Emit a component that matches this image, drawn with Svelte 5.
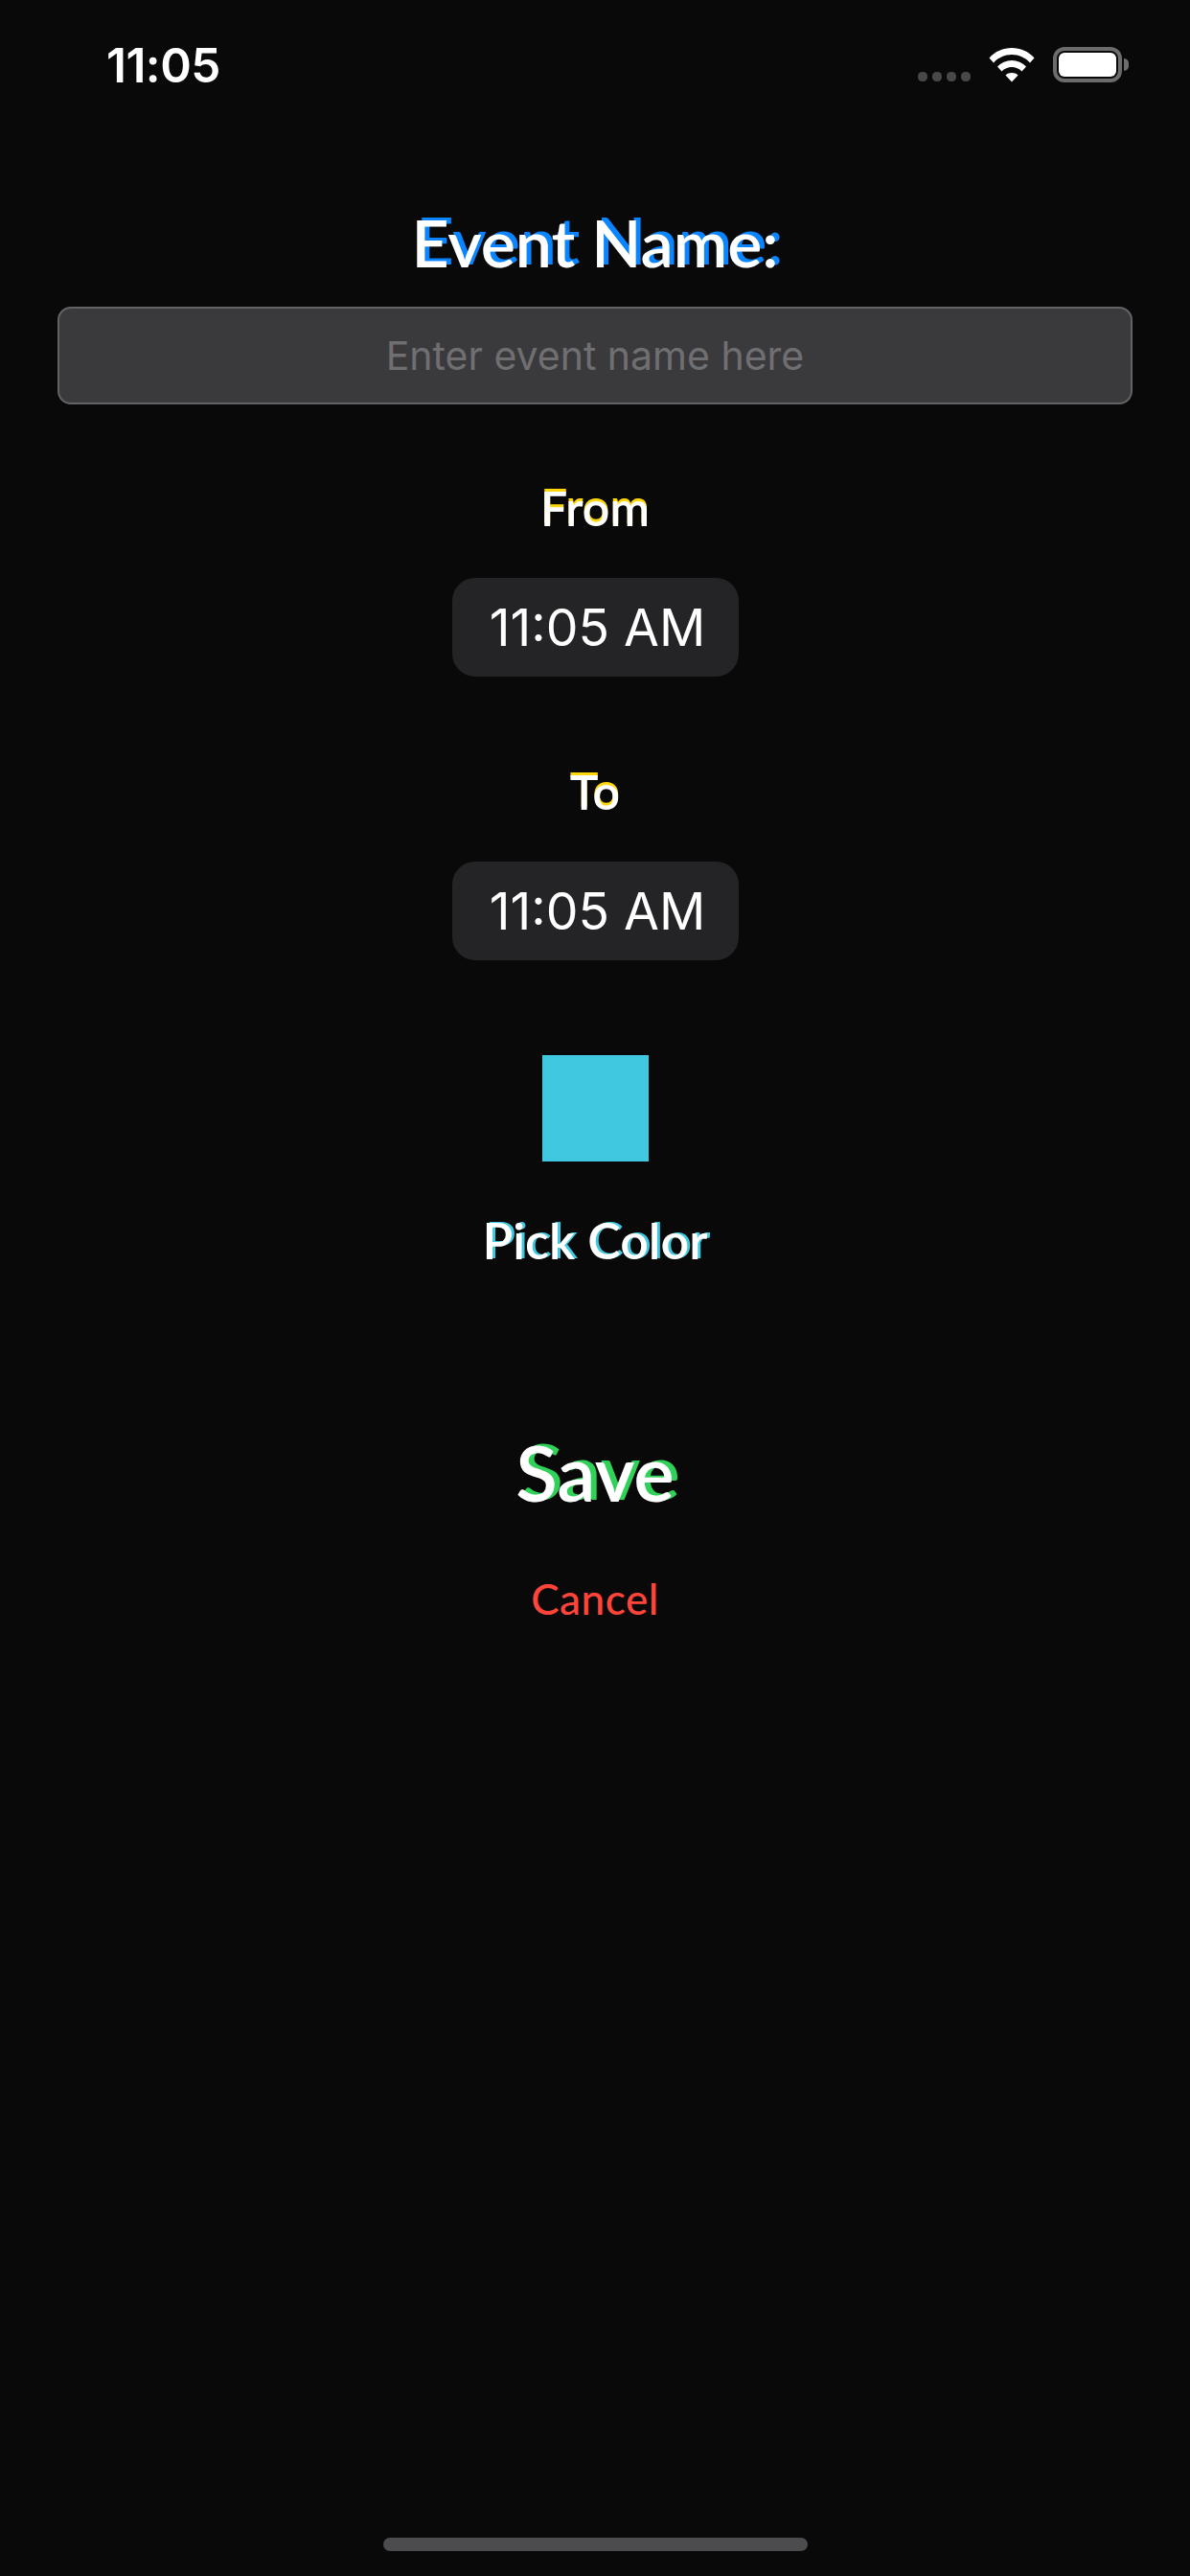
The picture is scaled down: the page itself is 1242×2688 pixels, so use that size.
<script>
	let eventName = $state('');
	const fromTime = '11:05 AM';
	const toTime = '11:05 AM';
</script>

<main class="screen">
	<header class="status">
		<span class="clock">11:05</span>
		<div class="indicators">
			<div class="signal"><i></i><i></i><i></i><i></i></div>
			<svg class="wifi" viewBox="0 0 48 37" width="48" height="37">
				<path d="M0.5 11.5C6.5 4.5 15 1 24 1s17.5 3.500 23.500 10.500L43 16.500C38 11 31.500 8 24 8S10 11 5 16.500Z" fill="#fff" />
				<path d="M9 20.500C13 16.200 18.200 14 24 14s11 2.200 15 6.500L34.500 25.500C31.700 22.500 28 21 24 21s-7.700 1.500-10.500 4.500Z" fill="#fff" />
				<path d="M17.500 29.500C19.300 27.700 21.500 27 24 27s4.700 .7 6.500 2.500L24 36.500Z" fill="#fff" />
			</svg>
			<div class="battery">
				<div class="cell"><div class="charge"></div></div>
				<div class="nub"></div>
			</div>
		</div>
	</header>

	<h1 class="title">Event Name:</h1>
	<input class="name-input" type="text" placeholder="Enter event name here" bind:value={eventName} />

	<div class="label from">From</div>
	<div class="picker">{fromTime}</div>

	<div class="label to">To</div>
	<div class="picker">{toTime}</div>

	<button class="swatch" aria-label="Color swatch"></button>
	<div class="pick-color">Pick Color</div>

	<button class="save">Save</button>
	<button class="cancel">Cancel</button>

	<div class="home-bar"></div>
</main>

<style>
	:global(body) {
		background: #09090a;
	}
	.screen {
		display: flex;
		flex-direction: column;
		align-items: center;
		width: 1242px;
		height: 2688px;
		background: #09090a;
		color: #fff;
		font-family: Lato, 'Liberation Sans', sans-serif;
		overflow: hidden;
	}
	.status {
		display: flex;
		justify-content: space-between;
		align-items: flex-start;
		box-sizing: border-box;
		width: 100%;
		height: 100px;
		padding: 39px 64px 0 111px;
	}
	.clock {
		font-family: Inter, sans-serif;
		font-size: 49.500px;
		font-weight: 600;
		line-height: 58px;
		letter-spacing: -0.5px;
	}
	.indicators {
		display: flex;
		align-items: flex-start;
		padding-top: 10px;
	}
	.signal {
		display: flex;
		gap: 5px;
		margin: 26px 19px 0 0;
	}
	.signal i {
		width: 10px;
		height: 10px;
		border-radius: 45%;
		background: #48484a;
	}
	.wifi {
		margin-right: 19px;
	}
	.battery {
		display: flex;
		align-items: center;
	}
	.cell {
		box-sizing: border-box;
		width: 72px;
		height: 37px;
		padding: 2px;
		border: 4px solid #6c6c6e;
		border-radius: 12px;
	}
	.charge {
		width: 100%;
		height: 100%;
		background: #fff;
		border-radius: 6px;
	}
	.nub {
		width: 5px;
		height: 13px;
		margin-left: 2px;
		background: #6c6c6e;
		border-radius: 0 6px 6px 0;
	}
	.title {
		margin: 123px 0 0;
		font-size: 68px;
		font-weight: 600;
		line-height: 60px;
		text-shadow: 5px -3px 0 #0a84ff;
	}
	.name-input {
		box-sizing: border-box;
		width: 1122px;
		height: 102px;
		margin-top: 37px;
		background: #3a3a3c;
		border: 2px solid #636366;
		border-radius: 14px;
		color: #fff;
		font-family: Inter, sans-serif;
		font-size: 41px;
		text-align: center;
		outline: none;
	}
	.name-input::placeholder {
		color: #6f6f72;
		opacity: 1;
	}
	.label {
		font-size: 50px;
		font-weight: 600;
		line-height: 60px;
		text-shadow: 0 -3px 0 #ffd60a;
	}
	.from {
		margin-top: 78px;
	}
	.to {
		margin-top: 90px;
	}
	.picker {
		box-sizing: border-box;
		width: 299px;
		height: 103px;
		margin-top: 43px;
		padding-left: 5px;
		background: #242426;
		border-radius: 24px;
		font-family: Inter, sans-serif;
		font-size: 53.500px;
		line-height: 103px;
		text-align: center;
	}
	.swatch {
		width: 111px;
		height: 111px;
		margin-top: 99px;
		padding: 0;
		border: none;
		background: #40c8e0;
	}
	.pick-color {
		margin-top: 52px;
		font-size: 52px;
		font-weight: 600;
		line-height: 60px;
		text-shadow: 3px -1px 0 #40c8e0;
	}
	button.save, button.cancel {
		padding: 0;
		border: none;
		background: none;
		font-family: inherit;
	}
	button.save {
		margin-top: 167px;
		color: #fff;
		font-size: 80px;
		font-weight: 600;
		line-height: 90px;
		text-shadow: 6px -2px 0 #30d158;
	}
	button.cancel {
		margin-top: 57px;
		color: #ff453a;
		font-size: 44px;
		font-weight: 500;
		line-height: 60px;
		letter-spacing: 0.5px;
	}
	.home-bar {
		width: 443px;
		height: 14px;
		margin-top: auto;
		margin-bottom: 26px;
		background: #4c4c4e;
		border-radius: 7px;
	}
</style>
